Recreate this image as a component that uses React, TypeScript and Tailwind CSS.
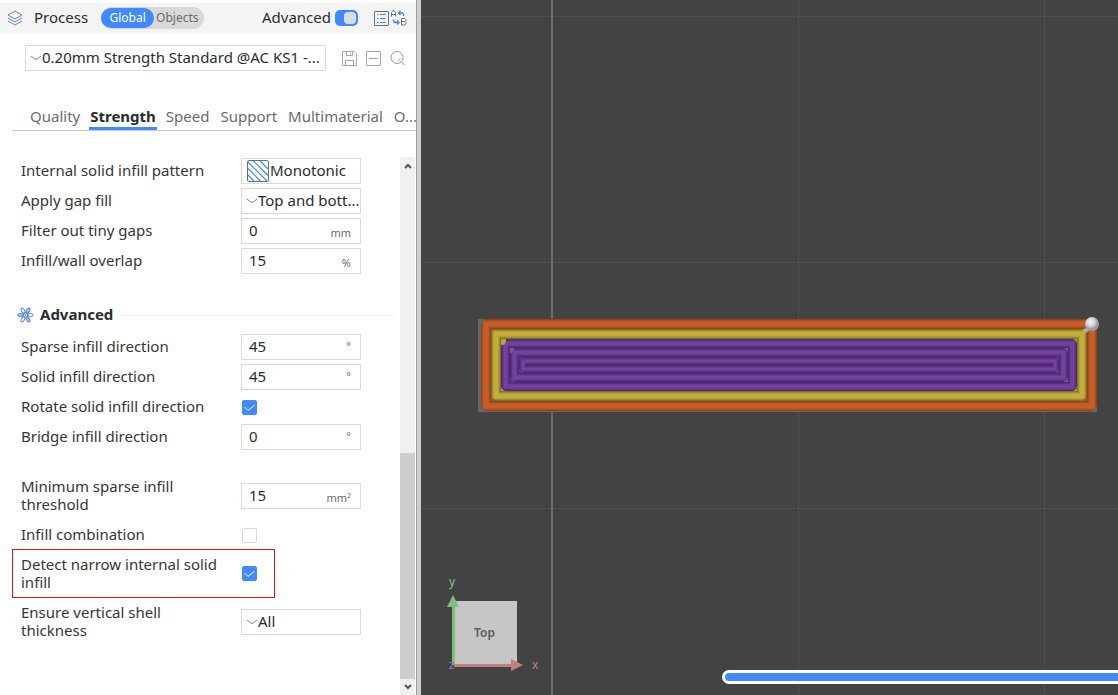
import { useState } from "react";
import type { ReactNode } from "react";

const TABS = ["Quality", "Strength", "Speed", "Support", "Multimaterial", "O..."];

const PURPLE = ["#4b2b6c", "#5a327f", "#693b95", "#7341a2"];

// Nested extrusion loops, from the outer wall to the innermost infill line
const LOOPS = [
  { x: 486, y: 324, w: 606, h: 82, size: 10, shades: ["#8f441b", "#aa4e1f", "#bd5724", "#c65d28"] },
  { x: 496, y: 334, w: 586, h: 62, size: 10, shades: ["#7d7127", "#9b8d2e", "#b3a336", "#c0b03b"] },
  { x: 505.5, y: 343.5, w: 567, h: 43, size: 9, shades: PURPLE },
  { x: 514.5, y: 352.5, w: 549, h: 25, size: 9, shades: PURPLE },
  { x: 523, y: 361, w: 532, h: 8, size: 8, shades: PURPLE },
];

const Chevron = () => (
  <svg width="12" height="6" viewBox="0 0 12 6" fill="none" stroke="#7c8085" className="shrink-0">
    <path d="M1 1 L4.5 3.8 Q6 5 7.5 3.8 L11 1" />
  </svg>
);

const Row = ({ id, label, children }: { id: string; label: string; children: ReactNode }) => (
  <div className="flex min-h-[26px] items-center">
    <label htmlFor={id} className="w-[220px] shrink-0 pr-4 pb-0.5 leading-[18px]">{label}</label>
    {children}
  </div>
);

const NumberBox = ({ id, value, unit, raised }: { id: string; value: string; unit: string; raised?: boolean }) => (
  <div className="flex h-[26px] w-[120px] items-center border border-[#dbdbdb] bg-white pr-[9px] pl-[7px]">
    <input id={id} defaultValue={value} className="h-6 w-full min-w-0 flex-1 bg-transparent pb-0.5 text-[#262e30] outline-none" />
    <span className={raised ? "pb-0.5 text-[11px] text-[#6b6b6b]" : "pt-1 text-[11px] text-[#6b6b6b]"}>{unit}</span>
  </div>
);

const SelectBox = ({ id, value }: { id: string; value: string }) => (
  <div className="flex h-[26px] w-[120px] items-center border border-[#dbdbdb] bg-white pl-1">
    <Chevron />
    <select id={id} className="h-6 min-w-0 flex-1 appearance-none bg-transparent pb-0.5 leading-[22px] text-[#262e30] outline-none">
      <option>{value}</option>
    </select>
  </div>
);

const CheckBox = ({ id, checked }: { id: string; checked?: boolean }) => (
  <span className="ml-px grid size-[15px]">
    <input
      id={id}
      type="checkbox"
      defaultChecked={checked}
      className="peer col-start-1 row-start-1 size-[15px] appearance-none rounded-[2px] border border-[#dbdbdb] bg-white checked:border-[#4189ff] checked:bg-[#4189ff]"
    />
    <svg viewBox="0 0 15 15" fill="none" stroke="#fff" className="pointer-events-none invisible col-start-1 row-start-1 size-[15px] peer-checked:visible">
      <path d="M2.5 7 L6 10.5 L12.5 5.2" />
    </svg>
  </span>
);

const LayersIcon = () => (
  <svg width="16" height="16" viewBox="0 0 16 16" fill="none" stroke="#7d8186">
    <path d="M8 1 L15 5 L8 9 L1 5 Z" />
    <path d="M1 8 L8 12 L15 8" stroke="#4189ff" />
    <path d="M1 11 L8 15 L15 11" />
  </svg>
);

const FlowerIcon = () => (
  <svg width="17" height="16" viewBox="0 0 17 16" fill="none" stroke="#4189ff">
    <ellipse cx="3.6" cy="8" rx="2.9" ry="1.5" fill="#4189ff" fillOpacity="0.5" />
    <ellipse cx="13.4" cy="8" rx="2.9" ry="1.5" stroke="#7286a8" />
    <ellipse cx="6" cy="3.8" rx="2.9" ry="1.5" transform="rotate(60 6 3.8)" />
    <ellipse cx="11" cy="3.8" rx="2.9" ry="1.5" transform="rotate(-60 11 3.8)" fill="#4189ff" fillOpacity="0.5" />
    <ellipse cx="6" cy="12.2" rx="2.9" ry="1.5" transform="rotate(-60 6 12.2)" stroke="#7286a8" />
    <ellipse cx="11" cy="12.2" rx="2.9" ry="1.5" transform="rotate(60 11 12.2)" fill="#4189ff" fillOpacity="0.5" />
    <circle cx="8.5" cy="8" r="2.6" stroke="#5f7db0" />
    <circle cx="8.5" cy="8" r="1" fill="#4189ff" stroke="none" />
  </svg>
);

const PatternIcon = () => (
  <svg width="22" height="22" viewBox="0 0 22 22" fill="none" className="shrink-0">
    <path d="M1 15 L7 21 M1 8.5 L13.5 21 M1 2 L20 21 M6.5 1 L21 15.5 M13 1 L21 9" stroke="#4189ff" strokeWidth="1.2" />
    <rect x="0.5" y="0.5" width="21" height="21" rx="1.5" stroke="#66717f" />
  </svg>
);

const Scene = () => (
  <svg className="absolute inset-0 h-full w-full">
    <g transform="translate(-421 0)">
      <g fill="#4e504f">
        <rect x="421" y="16" width="4000" height="1" />
        <rect x="421" y="262" width="4000" height="1" />
        <rect x="421" y="508" width="4000" height="1" />
        <rect x="798" y="0" width="1" height="4000" />
        <rect x="1044" y="0" width="1" height="4000" />
      </g>
      <rect x="551" y="0" width="2" height="4000" fill="#6a6c6b" />

      <rect x="478" y="319" width="619" height="93" fill="#656765" />
      {LOOPS.map((l) =>
        l.shades.map((color, i) => (
          <rect
            key={`${l.x}-${i}`}
            x={l.x}
            y={l.y}
            width={l.w}
            height={l.h}
            fill="none"
            stroke={color}
            strokeWidth={l.size - i * 2}
            strokeLinejoin={i === 0 ? "bevel" : "miter"}
          />
        ))
      )}
      <g>
        {/* Chamfered outer corners */}
        <path d="M481 319h5l-5 5z M481 411v-5l5 5z M1097 411h-5l5-5z" fill="#656765" />
        <path d="M491 329h4l-4 4z M491 400v-4l4 4z M1087 400h-4l4-4z" fill="#b9531f" />
        <path d="M501 339h5v3l-2 3h-3z M501 391v-3l3 3z M1077 339h-3l3 3z M1077 391h-3l3-3z" fill="#b5a334" />
        <path d="M510 348h4v2l-3 3h-1z M1068 348h-3l3 3z M1068 382h-3l3-3z" fill="#6b6480" />
        <path d="M519 357h3v1l-2 3h-1z M510 382v-3l3 3z M519 373v-3l3 3z M1059 357h-3l3 3z M1059 373h-3l3-3z" fill="#454187" />
      </g>

      {/* Nozzle marker at the seam */}
      <defs>
        <radialGradient id="ball" cx="40%" cy="35%">
          <stop offset="0" stopColor="#f4f4f4" />
          <stop offset="0.6" stopColor="#d5d5d5" />
          <stop offset="1" stopColor="#9c9c9c" />
        </radialGradient>
      </defs>
      <path d="M1082 330 L1086 328 L1090 325 L1091 329 L1086 333 Z" fill="#b4aaa5" />
      <circle cx="1092" cy="324" r="7" fill="url(#ball)" />

      {/* View cube */}
      <rect x="454" y="601" width="63" height="64" fill="#c6c6c6" />
      <rect x="452" y="605" width="3" height="60" fill="#7dc17f" />
      <path d="M453 595 L459 607 H447 Z" fill="#7dc17f" />
      <rect x="454" y="664" width="60" height="3" fill="#c07f7f" />
      <path d="M523 665 L511 659 V671 Z" fill="#c07f7f" />
      <text x="474" y="637" fontSize="12" fontWeight="600" fill="#5c5c5c">Top</text>
      <text x="449" y="586" fontSize="12" fill="#7dc17f">y</text>
      <text x="449" y="669" fontSize="12" fill="#7f80c4">z</text>
      <text x="532" y="669" fontSize="12" fill="#c07f7f">x</text>
    </g>
  </svg>
);

const App = () => {
  const [tab, setTab] = useState("Strength");

  return (
    <div className="flex h-screen overflow-hidden bg-white font-['Noto_Sans',sans-serif] text-[15px] leading-[18px] text-[#363636]">
      <aside className="flex w-[416px] shrink-0 flex-col pt-[3px]">
        <header className="flex h-[30px] shrink-0 items-center bg-[#f4f4f4] pr-[9px] pl-[7px] text-[#262e30]">
          <LayersIcon />
          <h1 className="ml-[11px] pb-0.5">Process</h1>
          <div className="ml-[13px] flex h-[22px] items-center rounded-full bg-[#d9d9d9] pr-[5px] text-[12px] text-[#6b6b6b]">
            <button className="h-5 w-[53px] rounded-full bg-[#4189ff] text-white">Global</button>
            <button className="ml-[2px]">Objects</button>
          </div>
          <label htmlFor="advanced-mode" className="ml-auto pb-0.5">Advanced</label>
          <span className="ml-1 grid items-center">
            <input id="advanced-mode" type="checkbox" role="switch" defaultChecked className="col-start-1 row-start-1 h-4 w-[23px] appearance-none rounded-[5px] bg-[#b5b5b5] checked:bg-[#4189ff]" />
            <span className="pointer-events-none col-start-1 row-start-1 mr-[2px] size-3 justify-self-end rounded-[4px] bg-[#d6dce8]" />
          </span>
          <button aria-label="Parameter list" className="ml-4">
            <svg width="15" height="15" viewBox="0 0 15 15" fill="none" stroke="#6b7075">
              <rect x="0.5" y="0.5" width="14" height="14" rx="0.5" />
              <path d="M3 3.5h1.5M3 7.5h1.5M3 11.5h1.5M6 3.5h6M6 7.5h5M6 11.5h6" stroke="#4189ff" />
            </svg>
          </button>
          <button aria-label="Compare presets" className="ml-[2px]">
            <svg width="16" height="16" viewBox="0 0 16 16" fill="none" stroke="#6b7075">
              <path d="M0.5 6.5v-4l1.5-2h1l1.5 2v4M0.5 4.5h4" />
              <path d="M10.5 8.5v6.5h3l1.5-1v-1.5l-1-1h-3.5M14 11.5l1-1v-1l-1-1h-3.5" />
              <path d="M9.5 1 L7.5 3 L9.5 5 M8 3h3.5l1 1v2M2.5 9.5v1.5l1 1.5h3.5M6 10.5 L8 12.5 L6 14.5" stroke="#4189ff" strokeWidth="1.4" />
            </svg>
          </button>
        </header>

        <div className="mt-3 flex shrink-0 items-center pr-2.5 pl-[25px] text-[#262e30]">
          <div className="flex h-[26px] min-w-0 flex-1 items-center border border-[#dbdbdb] pl-1">
            <Chevron />
            <select aria-label="Process preset" className="h-6 min-w-0 flex-1 appearance-none bg-transparent pb-0.5 leading-[22px] outline-none">
              <option>0.20mm Strength Standard @AC KS1 -...</option>
            </select>
          </div>
          <div className="ml-4 flex gap-[9px]">
            <button aria-label="Save preset">
              <svg width="15" height="15" viewBox="0 0 15 15" fill="none" stroke="#a3a5a7">
                <path d="M0.5 0.5h11.5l2.5 2.5v11.5h-14zM4.5 0.5v4h6v-4M3.5 14.5v-5h8v5M8.5 2v1.5" />
              </svg>
            </button>
            <button aria-label="Delete preset">
              <svg width="15" height="15" viewBox="0 0 15 15" fill="none" stroke="#a3a5a7">
                <rect x="0.5" y="0.5" width="14" height="14" rx="0.5" />
                <path d="M3 7.5h9" />
              </svg>
            </button>
            <button aria-label="Search settings">
              <svg width="16" height="15" viewBox="0 0 16 15" fill="none" stroke="#96989a">
                <circle cx="7" cy="6.5" r="6" />
                <path d="M11.3 10.8 L15 14.5M10.3 7.5a3.5 3.5 0 0 1-2 2.2" />
              </svg>
            </button>
          </div>
        </div>

        <div role="tablist" className="mt-[34px] ml-3 flex h-[26px] shrink-0 gap-[7px] overflow-hidden border-b border-[#c8c8c8] pl-4 text-[#6b6b6b]">
          {TABS.map((name) => (
            <button
              key={name}
              role="tab"
              aria-selected={name === tab}
              onClick={() => setTab(name)}
              className={
                name === tab
                  ? "shrink-0 border-b-3 border-[#4189ff] px-px pb-px font-bold text-[#262e30]"
                  : "shrink-0 border-b-3 border-transparent px-[2px] pb-px"
              }
            >
              {name}
            </button>
          ))}
        </div>

        <div className="mt-[26px] flex min-h-0 flex-1">
          <form className="min-w-0 flex-1 overflow-hidden pt-px pl-[21px]">
            <div className="flex flex-col gap-1">
              <Row id="pattern" label="Internal solid infill pattern">
                <div className="flex h-[26px] w-[120px] items-center border border-[#dbdbdb] pl-[5px]">
                  <PatternIcon />
                  <select id="pattern" className="h-6 min-w-0 flex-1 appearance-none bg-transparent pb-0.5 pl-px leading-[22px] text-[#262e30] outline-none">
                    <option>Monotonic</option>
                  </select>
                </div>
              </Row>
              <Row id="gap-fill" label="Apply gap fill"><SelectBox id="gap-fill" value="Top and bott..." /></Row>
              <Row id="tiny-gaps" label="Filter out tiny gaps"><NumberBox id="tiny-gaps" value="0" unit="mm" /></Row>
              <Row id="overlap" label="Infill/wall overlap"><NumberBox id="overlap" value="15" unit="%" /></Row>
            </div>

            <div className="mt-8 -ml-1 flex h-[18px] items-center pr-[6px]">
              <FlowerIcon />
              <h2 className="ml-[6px] pb-0.5 font-bold text-[#262e30]">Advanced</h2>
              <hr className="ml-1 flex-1 border-[#eeeeee]" />
            </div>

            <div className="mt-2.5 flex flex-col gap-1">
              <Row id="sparse-dir" label="Sparse infill direction"><NumberBox id="sparse-dir" value="45" unit="°" raised /></Row>
              <Row id="solid-dir" label="Solid infill direction"><NumberBox id="solid-dir" value="45" unit="°" raised /></Row>
              <Row id="rotate" label="Rotate solid infill direction"><CheckBox id="rotate" checked /></Row>
              <Row id="bridge-dir" label="Bridge infill direction"><NumberBox id="bridge-dir" value="0" unit="°" raised /></Row>
            </div>

            <div className="mt-[27px] flex flex-col gap-[7px]">
              <Row id="min-sparse" label="Minimum sparse infill threshold"><NumberBox id="min-sparse" value="15" unit="mm²" /></Row>
              <Row id="combination" label="Infill combination"><CheckBox id="combination" /></Row>
            </div>
            <div className="mt-px -ml-[9px] flex h-[49px] w-[263px] items-center border border-[#f01010] pl-2">
              <Row id="narrow" label="Detect narrow internal solid infill"><CheckBox id="narrow" checked /></Row>
            </div>
            <div className="mt-[5px]">
              <Row id="shell" label="Ensure vertical shell thickness"><SelectBox id="shell" value="All" /></Row>
            </div>
          </form>

          <div className="mr-px flex w-[15px] flex-col bg-[#f0f0f0]">
            <button aria-label="Scroll up" className="flex h-[17px] items-center justify-center">
              <svg width="8" height="6" viewBox="0 0 8 6" fill="none" stroke="#555" strokeWidth="2"><path d="M1 5 L4 2 L7 5" /></svg>
            </button>
            <div className="flex flex-1 flex-col">
              <div className="flex-[279]" />
              <div className="flex-[226] bg-[#cdcdcd]" />
            </div>
            <button aria-label="Scroll down" className="flex h-4 items-center justify-center">
              <svg width="8" height="6" viewBox="0 0 8 6" fill="none" stroke="#555" strokeWidth="2"><path d="M1 1 L4 4 L7 1" /></svg>
            </button>
          </div>
        </div>
      </aside>

      <div className="w-[5px] shrink-0 border-l border-[#a0a0a0] bg-[#cbcdcc]" />

      <main className="relative min-w-0 flex-1 overflow-hidden bg-[#424443]">
        <Scene />
        <input
          type="range"
          aria-label="Move along the layer"
          defaultValue="100"
          className="absolute -right-4 bottom-[11px] left-[301px] h-[14px] appearance-none rounded-full border-3 border-white bg-[#4189ff] [&::-webkit-slider-thumb]:appearance-none"
        />
      </main>
    </div>
  );
};

export default App;
